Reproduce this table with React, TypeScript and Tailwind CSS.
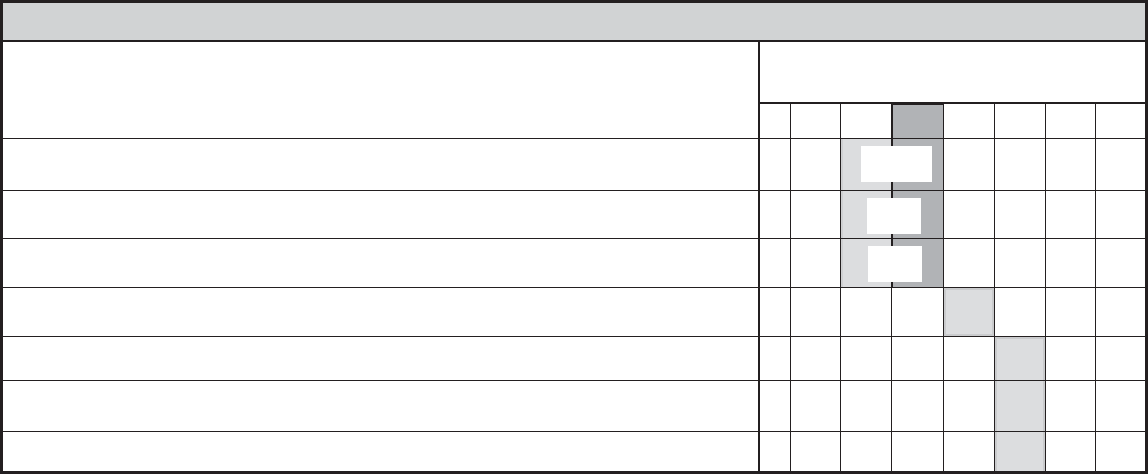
const W = ["w-[31px]", "w-[50px]", "w-[51px]", "w-[52px]", "w-[51px]", "w-[51px]", "w-[50px]", "flex-1"];

function Cell({ i, extra = "" }: { i: number; extra?: string }) {
  return <div className={`${W[i]} ${i < 7 ? "border-r border-[#231f20]" : ""} ${extra}`} />;
}

// cols 3+4 merged: light half, dark center mark, dark half, white box on top
function Split({ box }: { box: string }) {
  return (
    <div className="w-[103px] border-r border-[#231f20] bg-[linear-gradient(to_right,#dcdddf_0,#dcdddf_50px,#231f20_50px,#231f20_52px,#b1b3b6_52px)] shadow-[inset_2px_0_0_#cfd0d2] pt-[7px]">
      <div className={`h-[36px] bg-white ${box}`} />
    </div>
  );
}

function Row({ h, last = false, children }: { h: string; last?: boolean; children: React.ReactNode }) {
  return (
    <div className={`flex ${h} ${last ? "" : "border-b border-[#231f20]"}`}>
      <div className="w-[757px] border-r-2 border-[#231f20]" />
      <div className="flex flex-1">{children}</div>
    </div>
  );
}

function SplitRow({ h, box }: { h: string; box: string }) {
  return (
    <Row h={h}>
      <Cell i={0} />
      <Cell i={1} />
      <Split box={box} />
      <Cell i={4} />
      <Cell i={5} />
      <Cell i={6} />
      <Cell i={7} />
    </Row>
  );
}

function ShadeRow({ h, col, shade, last = false }: { h: string; col: number; shade: string; last?: boolean }) {
  return (
    <Row h={h} last={last}>
      {[0, 1, 2, 3, 4, 5, 6, 7].map((i) => (
        <Cell key={i} i={i} extra={i === col ? `bg-[#dcdddf] ${shade}` : ""} />
      ))}
    </Row>
  );
}

export default function App() {
  return (
    <div className="w-[1148px] h-[474px] border-[3px] border-[#231f20] bg-white flex flex-col">
      <div className="h-[39px] bg-[#d1d3d4] border-b-2 border-[#231f20]" />

      <div className="flex h-[97px] border-b border-[#231f20]">
        <div className="w-[757px] border-r-2 border-[#231f20]" />
        <div className="flex-1 flex flex-col">
          <div className="h-[62px] border-b-2 border-[#231f20]" />
          <div className="flex flex-1">
            {[0, 1, 2, 3, 4, 5, 6, 7].map((i) => (
              <Cell key={i} i={i} extra={i === 3 ? "bg-[#b1b3b6] shadow-[inset_1px_1px_0_#231f20]" : ""} />
            ))}
          </div>
        </div>
      </div>

      <SplitRow h="h-[52px]" box="ml-[20px] w-[71px]" />
      <SplitRow h="h-[48px]" box="ml-[26px] w-[54px]" />
      <SplitRow h="h-[49px]" box="ml-[27px] w-[54px]" />

      <ShadeRow h="h-[49px]" col={4} shade="shadow-[inset_0_0_0_2px_#cacbcd]" />
      <ShadeRow h="h-[44px]" col={5} shade="shadow-[inset_2px_2px_0_#cacbcd,inset_-2px_0_0_#cacbcd]" />
      <ShadeRow h="h-[51px]" col={5} shade="shadow-[inset_2px_0_0_#cacbcd,inset_-2px_0_0_#cacbcd]" />
      <ShadeRow h="flex-1" col={5} shade="shadow-[inset_2px_0_0_#cacbcd,inset_-2px_0_0_#cacbcd]" last />
    </div>
  );
}
